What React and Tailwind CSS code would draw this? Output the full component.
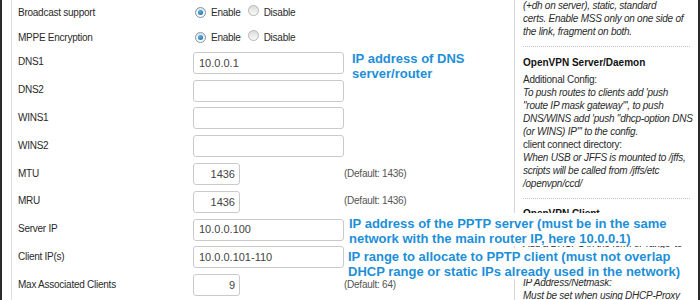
import React from "react";

const Radio = ({ checked }) => (
    <span
        className={`inline-flex items-center justify-center w-[11px] h-[11px] rounded-full border ${checked ? "border-[#7f95a8] bg-gradient-to-b from-[#dfe6ec] to-[#ffffff]" : "border-[#b4b4b4] bg-gradient-to-b from-[#dcdcdc] to-[#fafafa]"}`}
    >
        {checked && <span className="w-[5px] h-[5px] rounded-full bg-[radial-gradient(circle_at_40%_35%,#5fb3e6,#0f5f96)]" />}
    </span>
);

const RadioRow = ({ label, h }) => (
    <div className={`flex items-center ${h}`}>
        <div className="w-[175px]">{label}</div>
        <div className="flex items-center ml-[2px]">
            <Radio checked />
            <span className="ml-[5px]">Enable</span>
            <span className="ml-[7px]"><Radio /></span>
            <span className="ml-[5px]">Disable</span>
        </div>
    </div>
);

const fields = [
    { label: "DNS1", value: "10.0.0.1" },
    { label: "DNS2", value: "" },
    { label: "WINS1", value: "" },
    { label: "WINS2", value: "" },
    { label: "MTU", value: "1436", small: true, def: "(Default: 1436)" },
    { label: "MRU", value: "1436", small: true, def: "(Default: 1436)" },
    { label: "Server IP", value: "10.0.0.100" },
    { label: "Client IP(s)", value: "10.0.0.101-110" },
    { label: "Max Associated Clients", value: "9", small: true, def: "(Default: 64)" },
];

const App = () => {
    return (
        <div className="relative w-[700px] h-[300px] overflow-hidden bg-white border-x-2 border-[#2b2b2b] font-['Liberation_Sans',Arial,sans-serif] text-[10px] tracking-[-0.25px] text-[#2a2a2a]">
            <div className="flex h-full">
                <div className="w-[9px] shrink-0" />

                {/* form */}
                <div className="w-[503px] shrink-0 border-l border-[#dedede] pl-[6px]">
                    <RadioRow label="Broadcast support" h="h-[25px]" />
                    <RadioRow label="MPPE Encryption" h="h-[24px]" />
                    {fields.map((f) => (
                        <div key={f.label} className="flex items-center h-[27.8px]">
                            <div className="w-[175px] -mt-[2px]">{f.label}</div>
                            <div className="w-[151px] flex">
                                <div
                                    className={`h-[22px] border border-[#cacaca] rounded-[3px] flex items-center text-[11px] tracking-normal text-[#444] ${f.small ? "w-[47px] justify-end pr-[4px]" : "w-[151px] pl-[5px]"}`}
                                >
                                    {f.value}
                                </div>
                            </div>
                            {f.def && <span className="text-[#555] -mt-[2px]">{f.def}</span>}
                        </div>
                    ))}
                </div>

                {/* sidebar */}
                <div className="flex-1 border-l border-[#d6d6d6] pl-[8px] leading-[13px] whitespace-nowrap">
                    <div className="-mt-[1.5px] italic">
                        <div>(+dh on server), static, standard</div>
                        <div>certs. Enable MSS only on one side of</div>
                        <div>the link, fragment on both.</div>
                    </div>
                    <div className="mt-[8px] mr-[8px] border-t border-dotted border-[#c4c4c4]" />
                    <div className="mt-[9px] font-bold tracking-normal text-[#111]">OpenVPN Server/Daemon</div>
                    <div className="mt-[4px]">Additional Config:</div>
                    <div className="italic">
                        <div>To push routes to clients add 'push</div>
                        <div>"route IP mask gateway"', to push</div>
                        <div>DNS/WINS add 'push "dhcp-option DNS</div>
                        <div>(or WINS) IP"' to the config.</div>
                    </div>
                    <div>client connect directory:</div>
                    <div className="italic">
                        <div>When USB or JFFS is mounted to /jffs,</div>
                        <div>scripts will be called from /jffs/etc</div>
                        <div>/openvpn/ccd/</div>
                    </div>
                    <div className="mt-[8px] mr-[8px] border-t border-dotted border-[#c4c4c4]" />
                    <div className="mt-[8px] font-bold tracking-normal text-[#111]">OpenVPN Client</div>
                    <div className="mt-[17px]">Add a DHCPS in the form of 'range' to</div>
                    <div className="mt-[26px] italic">IP Address/Netmask:</div>
                    <div className="italic">Must be set when using DHCP-Proxy</div>
                </div>
            </div>

            {/* annotations */}
            <div className="absolute left-[350px] top-[51px] font-bold text-[13px] leading-[15px] tracking-normal text-[#1d8fd8]">
                <div>IP address of DNS</div>
                <div>server/router</div>
            </div>
            <div className="absolute left-[343px] top-[213px] w-[351px] bg-white pl-[4px] pt-[2.5px] font-bold text-[13px] leading-[15px] tracking-normal text-[#1d8fd8] whitespace-nowrap">
                <div>IP address of the PPTP server (must be in the same</div>
                <div>network with the main router IP, here 10.0.0.1)</div>
            </div>
            <div className="absolute left-[343px] top-[248px] w-[351px] bg-white pl-[3px] pt-[1px] font-bold text-[13px] leading-[15px] tracking-normal text-[#1d8fd8] whitespace-nowrap">
                <div>IP range to allocate to PPTP client (must not overlap</div>
                <div>DHCP range or static IPs already used in the network)</div>
            </div>
        </div>
    );
};

export default App;
